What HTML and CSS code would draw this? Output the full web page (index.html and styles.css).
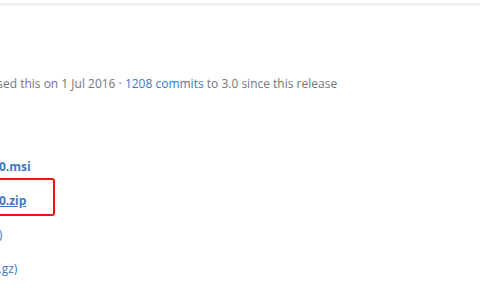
FILE: index.html
```html
<!DOCTYPE html>
<html lang="en">
<head>
    <meta charset="UTF-8">
    <title>Release 3.2.100</title>
    <link rel="stylesheet" href="styles.css">
</head>
<body>
    <!-- Header edge -->
    <div class="header-edge"></div>

    <div id="release">
        <!-- Release meta -->
        <p class="release-meta">
            <span class="author">enricogior</span> released this on 1 Jul 2016 &middot;
            <a href="#">1208 commits</a> to 3.0 since this release
        </p>

        <!-- Downloads -->
        <ul class="downloads">
            <li><a href="#">Redis-x64-3.2.100.msi</a></li>
            <li><a href="#" class="hover">Redis-x64-3.2.100.zip</a></li>
            <li><a href="#"><strong>Source code</strong> (zip)</a></li>
            <li><a href="#"><strong>Source code</strong> (tar.gz)</a></li>
        </ul>
    </div>

    <!-- Annotation -->
    <div class="highlight"></div>
</body>
</html>
```

FILE: styles.css
```css
/* Global Styles */
body {
    margin: 0;
    font-family: "Open Sans", Arial, sans-serif;
    background-color: #ffffff;
    overflow: hidden;
}

/* Header edge */
.header-edge {
    height: 3px;
    margin-top: 3px;
    background-color: #efefef;
    box-shadow: 0 0 2px #f4f4f4;
}

/* Release */
#release {
    padding-top: 1px;
}

.release-meta {
    margin: 68px 0 0 -95px;
    font-size: 12px;
    line-height: 18px;
    color: #767676;
    white-space: nowrap;
}

.release-meta .author {
    font-weight: bold;
    color: #333333;
}

.release-meta a {
    color: #4078c0;
    text-decoration: none;
}

/* Downloads */
.downloads {
    list-style: none;
    margin: 65px 0 0 -96px;
    padding: 0;
    font-size: 12px;
    font-weight: bold;
}

.downloads li {
    height: 34px;
    line-height: 18px;
    white-space: nowrap;
}

.downloads a {
    color: #4078c0;
    text-decoration: none;
}

.downloads li:nth-child(n+3) a {
    font-weight: normal;
}

.downloads a.hover {
    text-decoration: underline;
}

/* Red annotation box */
.highlight {
    position: absolute;
    left: -10px;
    top: 178px;
    width: 61px;
    height: 34px;
    border: 2px solid #f01414;
    border-radius: 3px;
}
```
